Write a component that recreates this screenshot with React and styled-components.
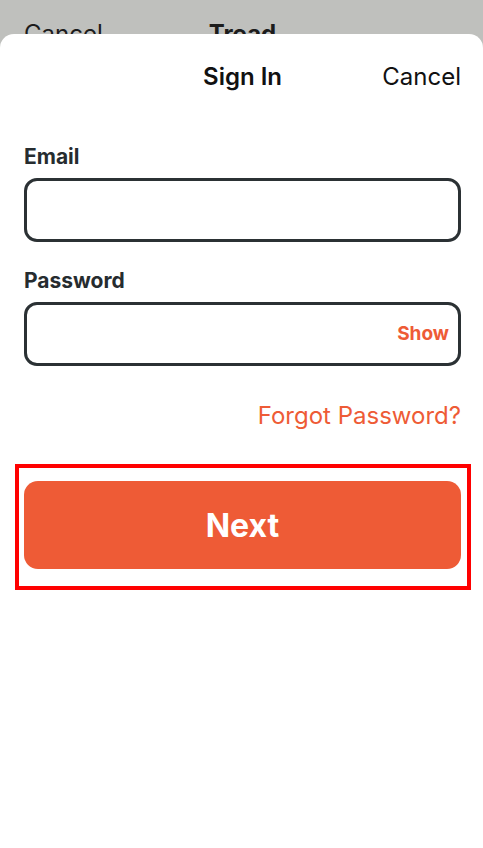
import React from "react";
import styled, { createGlobalStyle } from "styled-components";

const GlobalStyle = createGlobalStyle`
    * { box-sizing: border-box; }
    body {
        margin: 0;
        font-family: "Inter", "Liberation Sans", sans-serif;
        background: #bfc0bd;
    }
`;

const Screen = styled.div`
    width: 483px;
    height: 848px;
    overflow: hidden;
    background: #bfc0bd;
    display: flex;
    flex-direction: column;
`;

const BackBar = styled.div`
    height: 34px;
    overflow: hidden;
    padding: 19px 22px 0 24px;
    display: grid;
    grid-template-columns: 1fr auto 1fr;
    font-size: 24px;
    line-height: 29px;
    color: #1c1c1c;
`;

const BackTitle = styled.span`
    font-weight: 700;
`;

const Sheet = styled.div`
    flex: 1;
    background: #ffffff;
    border-radius: 14px 14px 0 0;
    padding: 28px 22px 0 24px;
    display: flex;
    flex-direction: column;
`;

const Header = styled.div`
    display: grid;
    grid-template-columns: 1fr auto 1fr;
    align-items: center;
    font-size: 24px;
    line-height: 29px;
    color: #111;
`;

const Title = styled.span`
    font-weight: 600;
`;

const HeaderAction = styled.span`
    justify-self: end;
    font-weight: 400;
`;

const Label = styled.label`
    display: block;
    font-size: 21px;
    line-height: 25px;
    font-weight: 700;
    color: #262c2f;
    margin-top: ${props => props.top}px;
    margin-bottom: 9px;
`;

const Field = styled.div`
    height: 64px;
    border: 3px solid #2b3134;
    border-radius: 13px;
    display: flex;
    align-items: center;
    justify-content: flex-end;
    padding: 0 9px 0 14px;
`;

const ShowToggle = styled.span`
    font-size: 19px;
    font-weight: 700;
    color: #ee5b36;
    margin-top: -2px;
`;

const ForgotLink = styled.span`
    align-self: flex-end;
    margin-top: 35px;
    font-size: 24px;
    line-height: 29px;
    color: #ee5b36;
`;

const Highlight = styled.div`
    margin: 34px -10px 0 -9px;
    border: 4px solid #ff0000;
    padding: 13px 6px 17px 5px;
`;

const NextButton = styled.button`
    width: 100%;
    height: 88px;
    border: none;
    border-radius: 14px;
    background: #ee5b36;
    color: #ffffff;
    font-family: "Inter", "Liberation Sans", sans-serif;
    font-size: 32px;
    font-weight: 700;
    padding: 0;
`;

export default function App() {
    return (
        <>
            <GlobalStyle />
            <Screen>
                <BackBar>
                    <span>Cancel</span>
                    <BackTitle>Tread</BackTitle>
                    <span />
                </BackBar>
                <Sheet>
                    <Header>
                        <span />
                        <Title>Sign In</Title>
                        <HeaderAction>Cancel</HeaderAction>
                    </Header>
                    <Label top={53}>Email</Label>
                    <Field />
                    <Label top={26}>Password</Label>
                    <Field>
                        <ShowToggle>Show</ShowToggle>
                    </Field>
                    <ForgotLink>Forgot Password?</ForgotLink>
                    <Highlight>
                        <NextButton>Next</NextButton>
                    </Highlight>
                </Sheet>
            </Screen>
        </>
    );
}
